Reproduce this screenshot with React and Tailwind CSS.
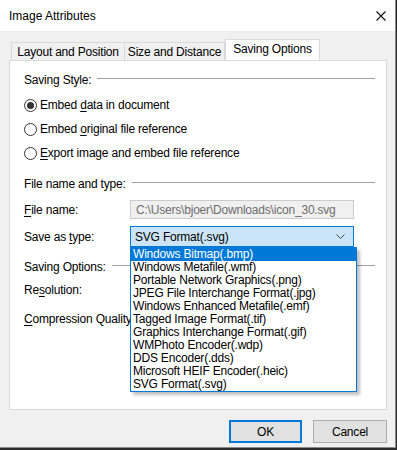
import { useState } from 'react'

const FORMATS = [
  'Windows Bitmap(.bmp)',
  'Windows Metafile(.wmf)',
  'Portable Network Graphics(.png)',
  'JPEG File Interchange Format(.jpg)',
  'Windows Enhanced Metafile(.emf)',
  'Tagged Image Format(.tif)',
  'Graphics Interchange Format(.gif)',
  'WMPhoto Encoder(.wdp)',
  'DDS Encoder(.dds)',
  'Microsoft HEIF Encoder(.heic)',
  'SVG Format(.svg)',
]

// label with the access-key letter underlined
function Key({ pre = '', k, post = '' }) {
  return <span>{pre}<span className="underline underline-offset-2">{k}</span>{post}</span>
}

function GroupHeader({ children }) {
  return (
    <div className="flex items-center h-4">
      <span className="whitespace-nowrap pr-[6px]">{children}</span>
      <div className="flex-1 border-t border-[#a0a0a0] -mt-[4px]" />
    </div>
  )
}

function Radio({ checked, children }) {
  return (
    <div className="flex items-center h-6">
      <span className="w-[13px] h-[13px] rounded-full border border-[#333] bg-white flex items-center justify-center">
        {checked && <span className="w-[7px] h-[7px] rounded-full bg-[#333]" />}
      </span>
      <span className="pl-[3px]">{children}</span>
    </div>
  )
}

export default function App() {
  const [style] = useState('embed')

  return (
    <div className="w-[397px] h-[450px] bg-[#2b2b2b] font-['Liberation_Sans',Arial,sans-serif] text-[12px] tracking-[-0.2px] text-black leading-4">
      <div className="w-[396px] h-[448px] bg-[#f0f0f0] border-r border-b border-[#8a8a8a] flex flex-col">
        {/* Title bar */}
        <div className="h-[31px] bg-white flex items-center justify-between pl-[9px] pr-[9px]">
          <span className="tracking-normal">Image Attributes</span>
          <svg width="10" height="10" viewBox="0 0 10 10">
            <path d="M0.5 0.5 L9.5 9.5 M9.5 0.5 L0.5 9.5" stroke="#111" strokeWidth="1.1" />
          </svg>
        </div>

        {/* Tabs */}
        <div className="flex pl-[11px] pt-2">
          <div className="w-[113px] h-[18px] mt-[3px] bg-[#f0f0f0] border border-b-0 border-r-0 border-[#d9d9d9] flex items-center justify-center">Layout and Position</div>
          <div className="w-[101px] h-[18px] mt-[3px] bg-[#f0f0f0] border border-b-0 border-[#d9d9d9] flex items-center justify-center">Size and Distance</div>
          <div className="w-[95px] h-[21px] bg-white border border-b-0 border-[#d9d9d9] flex items-start justify-center pt-[1px] relative z-10 -mb-px">Saving Options</div>
        </div>

        {/* Panel */}
        <div className="ml-[9px] w-[378px] h-[350px] bg-white border border-[#d9d9d9] pl-[14px] pr-[11px] pt-[11px] relative">
          <GroupHeader>Saving Style:</GroupHeader>
          <div className="mt-[5px]">
            <Radio checked={style === 'embed'}><Key pre="Embed " k="d" post="ata in document" /></Radio>
            <Radio><Key pre="Embed " k="o" post="riginal file reference" /></Radio>
            <Radio><Key k="E" post="xport image and embed file reference" /></Radio>
          </div>

          <div className="mt-[11px]">
            <GroupHeader>File name and type:</GroupHeader>
          </div>

          <div className="flex items-center mt-2">
            <div className="w-[106px]"><Key k="F" post="ile name:" /></div>
            <div className="w-[224px] h-[19px] bg-[#f0f0f0] border border-[#cccccc] text-[#6d6d6d] pl-[5px] flex items-center">
              C:\Users\bjoer\Downloads\icon_30.svg
            </div>
          </div>

          <div className="flex items-center mt-[7px]">
            <div className="w-[106px]"><Key pre="Save as " k="t" post="ype:" /></div>
            <div className="relative">
              <div className="w-[224px] h-[21px] bg-[#cce4f7] border border-[#0078d7] pl-[4px] pr-[8px] flex items-center justify-between">
                <span>SVG Format(.svg)</span>
                <svg width="9" height="5" viewBox="0 0 9 5">
                  <path d="M0.5 0.5 L4.5 4.5 L8.5 0.5" fill="none" stroke="#444" strokeWidth="1" />
                </svg>
              </div>
              <div className="absolute left-0 top-[21px] w-[227px] bg-white border border-[#0078d7] shadow-[3px_3px_3px_rgba(0,0,0,0.25)] z-20">
                {FORMATS.map((f, i) => (
                  <div
                    key={f}
                    className={i === 0 ? 'h-[13px] leading-[13px] pl-[2px] bg-[#0078d7] text-white' : 'h-[13px] leading-[13px] pl-[2px]'}
                  >
                    {f}
                  </div>
                ))}
              </div>
            </div>
          </div>

          <div className="mt-3">
            <GroupHeader>Saving Options:</GroupHeader>
          </div>
          <div className="mt-[7px]"><Key pre="Re" k="s" post="olution:" /></div>
          <div className="mt-[13px]"><Key k="C" post="ompression Quality" /></div>
        </div>

        {/* Buttons */}
        <div className="flex justify-end gap-[11px] pr-[8px] mt-[10px]">
          <button className="w-[73px] h-[23px] bg-[#e1e1e1] border-2 border-[#0078d7]">OK</button>
          <button className="w-[74px] h-[23px] bg-[#e1e1e1] border border-[#adadad]">Cancel</button>
        </div>
      </div>
    </div>
  )
}
